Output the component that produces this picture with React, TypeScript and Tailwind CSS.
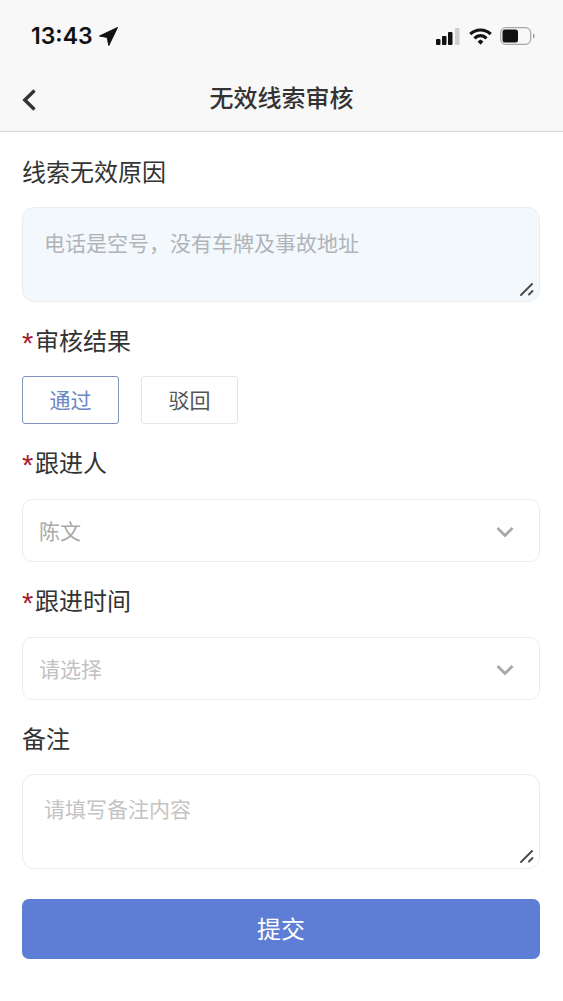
const font = { fontFamily: '"Noto Sans CJK SC", "Liberation Sans", sans-serif' };

function Grip() {
  return (
    <svg className="absolute right-[5px] bottom-[5px]" width="14" height="14" viewBox="0 0 14 14">
      <path d="M1 13 L12 2" stroke="#4a4a4a" strokeWidth="1.9" strokeLinecap="round" />
      <path d="M9 12.5 L12.5 9" stroke="#4a4a4a" strokeWidth="1.9" strokeLinecap="round" />
    </svg>
  );
}

function Label({ text, required, className }: { text: string; required?: boolean; className: string }) {
  return (
    <div className={`flex items-center h-[34px] text-[24px] leading-[34px] text-[#333] ${className}`}>
      {required && (
        <span className="w-[13px] h-[34px] pt-[3px] text-[#a8202f] text-[29px] leading-[34px]" style={{ fontFamily: '"Liberation Sans", sans-serif' }}>*</span>
      )}
      <span>{text}</span>
    </div>
  );
}

function Select({ value, className, tone }: { value: string; className: string; tone: string }) {
  return (
    <div className={`flex items-center justify-between h-[63px] rounded-[10px] border border-[#ebebeb] bg-white pl-[16px] pr-[25px] ${className}`}>
      <span className={`text-[21px] ${tone}`}>{value}</span>
      <svg className="mt-[3px]" width="18" height="12" viewBox="0 0 18 12" fill="none">
        <path d="M1.5 2 L9 9.5 L16.5 2" stroke="#a9a9a9" strokeWidth="2.8" />
      </svg>
    </div>
  );
}

export default function App() {
  return (
    <div className="w-[563px] h-[1001px] bg-white overflow-hidden" style={font}>
      <div className="h-[132px] bg-[#f8f8f8] border-b border-[#d4d4d4]">
        <div className="flex items-center justify-between h-[72px] pl-[31px] pr-[27px]">
          <div className="flex items-center gap-[6px]">
            <span className="text-[23px] font-semibold text-[#111]" style={{ fontFamily: 'Inter, sans-serif' }}>13:43</span>
            <svg width="19" height="19" viewBox="0 0 19 19"><path d="M18.5 0.5 L0.5 9 L8.2 10.4 L9.8 18.5 Z" fill="#111" stroke="#111" strokeWidth="1" strokeLinejoin="round" /></svg>
          </div>
          <div className="flex items-center">
            <svg width="24" height="17" viewBox="0 0 24 17">
              <rect x="0" y="11" width="4.5" height="6" rx="1" fill="#111" />
              <rect x="6" y="8" width="4.5" height="9" rx="1" fill="#111" />
              <rect x="12" y="4" width="4.5" height="13" rx="1" fill="#111" />
              <rect x="19" y="0" width="4.5" height="17" rx="1" fill="#cfcfcf" />
            </svg>
            <svg className="ml-[9px]" width="23" height="17" viewBox="0 0 23 17" fill="none">
              <path d="M1.3 6.2 C7 0.6 16 0.6 21.7 6.2" stroke="#111" strokeWidth="3.2" />
              <path d="M5.5 10.4 C9 6.8 14 6.8 17.5 10.4" stroke="#111" strokeWidth="3.2" />
              <path d="M8.6 13.4 L11.5 11.4 L14.4 13.4 L11.5 16.8 Z" fill="#111" />
            </svg>
            <svg className="ml-[8px]" width="36" height="18" viewBox="0 0 36 18" fill="none">
              <rect x="0.7" y="0.7" width="30" height="16.6" rx="5" stroke="#a8a8a8" strokeWidth="1.2" />
              <rect x="2.5" y="2.5" width="15.5" height="13" rx="2.5" fill="#111" />
              <path d="M33 6.5 C35 7.2 35 10.8 33 11.5 Z" fill="#999" />
            </svg>
          </div>
        </div>
        <div className="relative flex items-center justify-center h-[54px] pb-[4px]">
          <svg className="absolute left-[21px] top-[16px]" width="17" height="24" viewBox="0 0 17 24" fill="none">
            <path d="M13.5 2.5 L3.8 12 L13.5 21.5" stroke="#333" strokeWidth="3.4" />
          </svg>
          <span className="text-[24px] font-medium text-[#333]">无效线索审核</span>
        </div>
      </div>

      <div className="pl-[22px] pr-[23px]">
        <Label text="线索无效原因" className="mt-[22px]" />
        <div className="relative h-[95px] mt-[19px] rounded-[12px] border border-[#e9eef3] bg-[#f3f8fc] pl-[21px] pt-[16px] text-[21px] leading-[36px] text-[#b0b4b8]">
          电话是空号，没有车牌及事故地址
          <Grip />
        </div>

        <Label text="审核结果" required className="mt-[21px]" />
        <div className="flex gap-[22px] mt-[19px]">
          <div className="flex items-center justify-center w-[97px] h-[48px] rounded-[3px] border border-[#7f93ba] text-[21px] text-[#6a86c4]">通过</div>
          <div className="flex items-center justify-center w-[97px] h-[48px] rounded-[3px] border border-[#e6e6e6] text-[21px] text-[#555]">驳回</div>
        </div>

        <Label text="跟进人" required className="mt-[21px]" />
        <Select value="陈文" className="mt-[20px]" tone="text-[#a9a9a9]" />

        <Label text="跟进时间" required className="mt-[21px]" />
        <Select value="请选择" className="mt-[20px]" tone="text-[#c2c2c2]" />

        <Label text="备注" className="mt-[21px]" />
        <div className="relative h-[95px] mt-[19px] rounded-[12px] border border-[#ebebeb] bg-white pl-[21px] pt-[15px] text-[21px] leading-[36px] text-[#c4c4c4]">
          请填写备注内容
          <Grip />
        </div>

        <div className="flex items-center justify-center h-[60px] mt-[30px] pb-[2px] rounded-[7px] bg-[#5e7dd5] text-[24px] text-white">提交</div>
      </div>
    </div>
  );
}
